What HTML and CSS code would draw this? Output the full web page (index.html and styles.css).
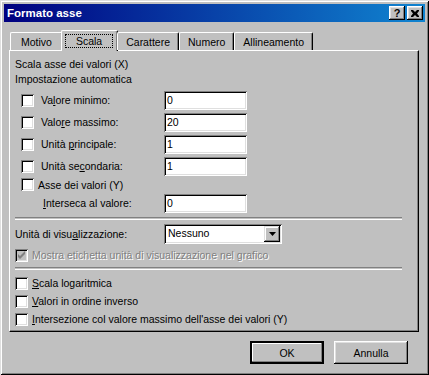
FILE: index.html
```html
<!DOCTYPE html>
<html lang="it">
<head>
  <meta charset="UTF-8">
  <title>Formato asse</title>
  <link rel="stylesheet" href="styles.css">
</head>
<body>
  <div class="window">
    <div class="titlebar">
      <span class="title">Formato asse</span>
      <div class="caption-buttons">
        <span class="caption-btn">?</span>
        <span class="caption-btn">
          <svg width="8" height="7" viewBox="0 0 8 7"><path d="M0 0h2l2 2 2-2h2v1L6 3.5 8 6v1H6L4 5 2 7H0V6l2-2.5L0 1z" fill="#000"/></svg>
        </span>
      </div>
    </div>

    <div class="tabs">
      <div class="tab">Motivo</div>
      <div class="tab active"><span class="focus">Scala</span></div>
      <div class="tab">Carattere</div>
      <div class="tab">Numero</div>
      <div class="tab">Allineamento</div>
    </div>

    <div class="panel">
      <div class="text-line">Scala asse dei valori (X)</div>
      <div class="text-line">Impostazione automatica</div>

      <div class="auto-rows">
        <div class="row">
          <span class="check"></span>
          <span class="row-label">Va<u>l</u>ore minimo:</span>
          <span class="field">0</span>
        </div>
        <div class="row">
          <span class="check"></span>
          <span class="row-label">Valo<u>r</u>e massimo:</span>
          <span class="field">20</span>
        </div>
        <div class="row">
          <span class="check"></span>
          <span class="row-label">Unità <u>p</u>rincipale:</span>
          <span class="field">1</span>
        </div>
        <div class="row">
          <span class="check"></span>
          <span class="row-label">Unità se<u>c</u>ondaria:</span>
          <span class="field">1</span>
        </div>
        <div class="row short">
          <span class="check"></span>
          <span class="check-text">Asse dei valori (Y)</span>
        </div>
        <div class="row">
          <span class="row-label indent"><u>I</u>nterseca al valore:</span>
          <span class="field">0</span>
        </div>
      </div>

      <div class="separator"></div>

      <div class="combo-row">
        <span class="combo-label">Unità di visu<u>a</u>lizzazione:</span>
        <div class="combo">
          <span class="combo-value">Nessuno</span>
          <span class="combo-btn">
            <svg width="7" height="4" viewBox="0 0 7 4"><path d="M0 0h7L3.5 4z" fill="#000"/></svg>
          </span>
        </div>
      </div>

      <div class="option disabled">
        <span class="check checked">
          <svg width="9" height="9" viewBox="0 0 9 9"><path d="M1 3v3l2 2 5-5V0L3 5z" fill="#808080"/></svg>
        </span>
        <span class="option-text">Mostra etichetta unità di visualizzazione nel grafico</span>
      </div>

      <div class="separator"></div>

      <div class="options">
        <div class="option">
          <span class="check"></span>
          <span class="option-text"><u>S</u>cala logaritmica</span>
        </div>
        <div class="option">
          <span class="check"></span>
          <span class="option-text"><u>V</u>alori in ordine inverso</span>
        </div>
        <div class="option">
          <span class="check"></span>
          <span class="option-text"><u>I</u>ntersezione col valore massimo dell'asse dei valori (Y)</span>
        </div>
      </div>
    </div>

    <div class="actions">
      <button class="btn default">OK</button>
      <button class="btn">Annulla</button>
    </div>
  </div>
</body>
</html>
```

FILE: styles.css
```css
body {
  margin: 0;
  background: #c0c0c0;
  font-family: "Liberation Sans", Arial, sans-serif;
  font-size: 10.5px;
  color: #000;
}
.window {
  width: 429px;
  height: 375px;
  box-sizing: border-box;
  padding: 4px;
  background: #c0c0c0;
  box-shadow: inset 1px 1px #dfdfdf, inset -1px -1px #000,
              inset 2px 2px #fff, inset -2px -2px #808080;
}
.titlebar {
  height: 18px;
  display: flex;
  align-items: center;
  justify-content: space-between;
  padding: 0 2px 0 3px;
  background: linear-gradient(to right, #000080, #1084d0);
}
.title {
  color: #fff;
  font-weight: bold;
  font-size: 11.5px;
}
.caption-buttons {
  display: flex;
  gap: 2px;
}
.caption-btn {
  width: 16px;
  height: 14px;
  box-sizing: border-box;
  display: flex;
  align-items: center;
  justify-content: center;
  background: #c0c0c0;
  font-weight: bold;
  font-size: 11px;
  box-shadow: inset -1px -1px #000, inset 1px 1px #fff,
              inset -2px -2px #808080, inset 2px 2px #dfdfdf;
}

/* tabs */
.tabs {
  display: flex;
  align-items: flex-end;
  height: 21px;
  margin-top: 7px;
  padding-left: 6px;
  position: relative;
  z-index: 1;
}
.tab {
  height: 18px;
  box-sizing: border-box;
  padding: 3px 8px 0;
  background: #c0c0c0;
  border-top: 1px solid #fff;
  border-left: 1px solid #fff;
  border-right: 1px solid #000;
  border-radius: 2px 2px 0 0;
  box-shadow: inset -1px 0 #808080;
}
.tab:first-child {
  padding: 3px 10px 0;
}
.tab.active {
  height: 21px;
  margin: 0 -1px -1px -2px;
  padding: 3px 4px 0 3px;
}
.focus {
  display: inline-block;
  line-height: 14px;
  padding: 0 11px;
  outline: 1px dotted #000;
  outline-offset: -1px;
}

/* panel */
.panel {
  margin: 0 6px 0 5px;
  height: 282px;
  box-sizing: border-box;
  padding: 6px 16px 0 5px;
  border-top: 1px solid #fff;
  border-left: 1px solid #fff;
  border-right: 1px solid #000;
  border-bottom: 1px solid #000;
  box-shadow: inset -1px -1px #808080;
}
.text-line {
  line-height: 15px;
}
.auto-rows {
  margin-top: 2px;
}
.row {
  height: 22px;
  display: flex;
  align-items: center;
  padding-left: 6px;
}
.row.short {
  height: 15px;
}
.check {
  width: 13px;
  height: 13px;
  flex: none;
  box-sizing: border-box;
  display: flex;
  align-items: center;
  justify-content: center;
  background: #fff;
  box-shadow: inset 1px 1px #808080, inset -1px -1px #fff,
              inset 2px 2px #000, inset -2px -2px #dfdfdf;
}
.row-label {
  width: 123px;
  margin-left: 7px;
}
.row-label.indent {
  width: 121px;
  margin-left: 22px;
}
.check-text {
  margin-left: 4px;
}
.field {
  width: 83px;
  height: 19px;
  box-sizing: border-box;
  padding: 3px 3px 0;
  background: #fff;
  box-shadow: inset 1px 1px #808080, inset -1px -1px #fff,
              inset 2px 2px #000, inset -2px -2px #dfdfdf;
}
.separator {
  height: 1px;
  border-top: 1px solid #808080;
  border-bottom: 1px solid #fff;
  margin: 3px 0 0;
}
.combo-row {
  display: flex;
  align-items: center;
  height: 20px;
  margin-top: 4px;
}
.combo-label {
  width: 149px;
}
.combo {
  width: 118px;
  height: 20px;
  box-sizing: border-box;
  padding: 2px;
  display: flex;
  background: #fff;
  box-shadow: inset 1px 1px #808080, inset -1px -1px #fff,
              inset 2px 2px #000, inset -2px -2px #dfdfdf;
}
.combo-value {
  flex: 1;
  padding: 1px 2px 0;
}
.combo-btn {
  width: 16px;
  display: flex;
  align-items: center;
  justify-content: center;
  background: #c0c0c0;
  box-shadow: inset -1px -1px #000, inset 1px 1px #dfdfdf,
              inset -2px -2px #808080, inset 2px 2px #fff;
}
.option {
  display: flex;
  align-items: center;
  height: 18px;
}
.option-text {
  margin-left: 4px;
}
.option.disabled {
  height: 18px;
  margin-top: 2px;
}
.option.disabled .check {
  background: #c0c0c0;
}
.option.disabled .option-text {
  color: #808080;
  text-shadow: 1px 1px #fff;
}
.options {
  margin-top: 4px;
}

/* buttons */
.actions {
  display: flex;
  justify-content: flex-end;
  gap: 10px;
  padding: 9px 17px 0 0;
}
.btn {
  width: 74px;
  height: 23px;
  font: inherit;
  background: #c0c0c0;
  border: none;
  box-shadow: inset -1px -1px #000, inset 1px 1px #fff,
              inset -2px -2px #808080, inset 2px 2px #dfdfdf;
}
.btn.default {
  outline: 1px solid #000;
  outline-offset: -1px;
  box-shadow: inset -2px -2px #000, inset 2px 2px #000,
              inset -3px -3px #808080, inset 3px 3px #fff;
}
```
